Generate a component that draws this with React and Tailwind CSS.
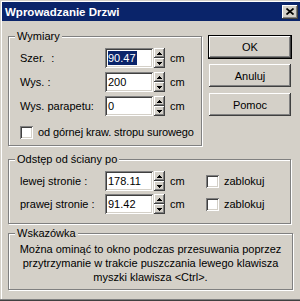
import React from 'react';

const raised =
  'shadow-[inset_-1px_-1px_#404040,inset_1px_1px_#ffffff,inset_-2px_-2px_#808080,inset_2px_2px_#d4d0c8]';
const sunken =
  'shadow-[inset_1px_1px_#808080,inset_-1px_-1px_#ffffff,inset_2px_2px_#404040,inset_-2px_-2px_#d4d0c8]';

const Arrow = ({ down }) => (
  <svg width="5" height="3" viewBox="0 0 5 3" shapeRendering="crispEdges">
    <path d={down ? 'M0 0h5L2.5 3z' : 'M0 3h5L2.5 0z'} fill="#000" />
  </svg>
);

const Spin = () => (
  <div className="flex flex-col w-[11px] h-[20px] ml-px">
    <div className={`h-[10px] bg-[#d4d0c8] flex items-center justify-center ${raised}`}>
      <Arrow />
    </div>
    <div className={`h-[10px] bg-[#d4d0c8] flex items-center justify-center ${raised}`}>
      <Arrow down />
    </div>
  </div>
);

const Field = ({ value, selected }) => (
  <div className={`w-[48px] h-[20px] bg-white flex items-center pl-[3px] ${sunken}`}>
    {selected ? (
      <span className="bg-[#0a246a] text-white leading-[14px] pr-px">{value}</span>
    ) : (
      <span>{value}</span>
    )}
  </div>
);

const Check = () => <div className={`w-[13px] h-[13px] bg-white shrink-0 ${sunken}`} />;

const Group = ({ title, className, children }) => (
  <div className={`relative border border-[#808080] shadow-[inset_1px_1px_#ffffff,1px_1px_#ffffff] ${className}`}>
    <span className="absolute left-[6px] top-[-8px] bg-[#d4d0c8] px-[2px] leading-[14px]">{title}</span>
    {children}
  </div>
);

const NumRow = ({ label, value, selected, className = '' }) => (
  <div className={`flex items-center h-[20px] ${className}`}>
    <span className="w-[85px] whitespace-pre">{label}</span>
    <Field value={value} selected={selected} />
    <Spin />
    <span className="ml-[5px]">cm</span>
  </div>
);

const SideRow = ({ label, value, className = '' }) => (
  <div className={`flex items-center h-[20px] ${className}`}>
    <span className="w-[85px]">{label}</span>
    <Field value={value} />
    <Spin />
    <span className="ml-[5px] w-[36px]">cm</span>
    <Check />
    <span className="ml-[5px]">zablokuj</span>
  </div>
);

const Button = ({ children, className = '' }) => (
  <div className={`bg-[#d4d0c8] flex items-center justify-center ${raised} ${className}`}>{children}</div>
);

export default function App() {
  return (
    <div className="w-[300px] h-[301px] bg-[#d4d0c8] pl-[2px] pt-[2px] font-['Liberation_Sans',Arial,sans-serif] text-[11px] text-black leading-[14px] shadow-[inset_0_-1px_#404040,inset_0_-2px_#808080,inset_1px_1px_#d4d0c8,inset_2px_2px_#ffffff] overflow-hidden">
      <div className="h-[19px] bg-[#0a246a] flex items-center justify-between pl-[3px] pr-[2px]">
        <span className="text-white font-bold text-[11.5px]">Wprowadzanie Drzwi</span>
        <Button className="w-[16px] h-[14px]">
          <svg width="8" height="7" viewBox="0 0 8 7">
            <path d="M0.5 0.5L7.5 6.5M7.5 0.5L0.5 6.5" stroke="#000" strokeWidth="1.7" />
          </svg>
        </Button>
      </div>

      <div className="pl-[6px]">
        <div className="flex mt-[14px]">
          <Group title="Wymiary" className="w-[194px] h-[110px] mt-px pt-[11px] pl-[11px]">
            <NumRow label="Szer.  :" value="90.47" selected />
            <NumRow label="Wys. :" value="200" className="mt-[4px]" />
            <NumRow label="Wys. parapetu:" value="0" className="mt-[4px]" />
            <div className="flex items-center mt-[9px]">
              <Check />
              <span className="ml-[5px] tracking-[-0.1px]">od górnej kraw. stropu surowego</span>
            </div>
          </Group>

          <div className="ml-[6px] flex flex-col">
            <div className="w-[84px] h-[24px] border border-black">
              <Button className="w-full h-full">OK</Button>
            </div>
            <Button className="w-[82px] h-[23px] ml-px mt-[5px]">Anuluj</Button>
            <Button className="w-[82px] h-[23px] ml-px mt-[6px]">Pomoc</Button>
          </div>
        </div>

        <Group title="Odstęp od ściany po" className="w-[283px] h-[65px] mt-[13px] pt-[11px] pl-[11px]">
          <SideRow label="lewej stronie :" value="178.11" />
          <SideRow label="prawej stronie :" value="91.42" className="mt-[3px]" />
        </Group>

        <Group title="Wskazówka" className="w-[285px] h-[57px] mt-[9px] pt-[8px] text-center">
          <p>Można ominąć to okno podczas przesuwania poprzez</p>
          <p>przytrzymanie w trakcie puszczania lewego klawisza</p>
          <p>myszki klawisza &lt;Ctrl&gt;.</p>
        </Group>
      </div>
    </div>
  );
}
